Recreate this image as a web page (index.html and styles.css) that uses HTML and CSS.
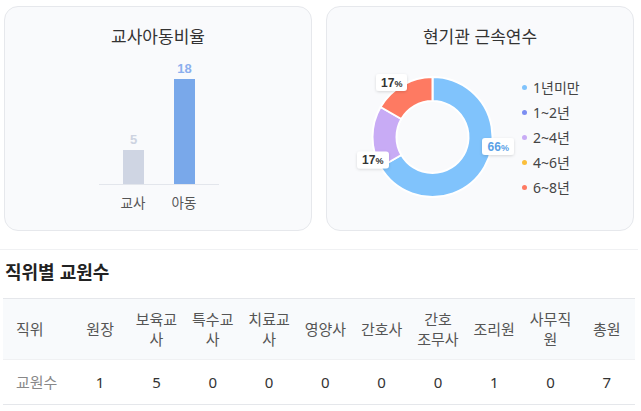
FILE: index.html
```html
<!DOCTYPE html>
<html lang="ko">
<head>
<meta charset="utf-8">
<link rel="stylesheet" href="styles.css">
</head>
<body>
<div class="page">
  <div class="cards">
    <section class="card">
      <h3 class="card-title">교사아동비율</h3>
      <svg class="bar-chart" width="306" height="175" viewBox="0 0 306 175">
        <line x1="94" y1="137.5" x2="214" y2="137.5" stroke="#e3e6ec" stroke-width="1"/>
        <rect x="118" y="103" width="21" height="34" fill="#cfd5e3"/>
        <rect x="169" y="32" width="21" height="105" fill="#79a8ea"/>
        <text class="val val-teacher" x="128.5" y="97" text-anchor="middle">5</text>
        <text class="val val-child" x="179.5" y="26" text-anchor="middle">18</text>
        <text class="cat" x="128" y="161" text-anchor="middle">교사</text>
        <text class="cat" x="179" y="161" text-anchor="middle">아동</text>
      </svg>
    </section>
    <section class="card">
      <h3 class="card-title">현기관 근속연수</h3>
      <div class="donut-row">
        <svg class="donut" width="192" height="175" viewBox="0 0 192 175">
          <defs>
            <filter id="sh" x="-30%" y="-40%" width="160%" height="180%">
              <feDropShadow dx="0" dy="1" stdDeviation="1.5" flood-color="#000" flood-opacity="0.14"/>
            </filter>
          </defs>
          <path d="M105.5 30 A60 60 0 1 1 53.54 120 L74.32 108 A36 36 0 1 0 105.5 54 Z" fill="#80c3fc" stroke="#fff" stroke-width="2"/>
          <path d="M53.54 120 A60 60 0 0 1 53.54 60 L74.32 72 A36 36 0 0 0 74.32 108 Z" fill="#c8abf5" stroke="#fff" stroke-width="2"/>
          <path d="M53.54 60 A60 60 0 0 1 105.5 30 L105.5 54 A36 36 0 0 0 74.32 72 Z" fill="#fe7a62" stroke="#fff" stroke-width="2"/>
          <rect x="49" y="27" width="31" height="17" rx="3" fill="#fff" filter="url(#sh)"/>
          <text class="pct" x="64.8" y="39.8" text-anchor="middle">17<tspan class="pct-sign">%</tspan></text>
          <rect x="30" y="104.5" width="32" height="17" rx="3" fill="#fff" filter="url(#sh)"/>
          <text class="pct" x="45.8" y="117.3" text-anchor="middle">17<tspan class="pct-sign">%</tspan></text>
          <rect x="155" y="91" width="32" height="17" rx="3" fill="#fff" filter="url(#sh)"/>
          <text class="pct pct-blue" x="171.3" y="103.8" text-anchor="middle">66<tspan class="pct-sign">%</tspan></text>
        </svg>
        <ul class="legend">
          <li><span class="dot dot-1"></span>1년미만</li>
          <li><span class="dot dot-2"></span>1~2년</li>
          <li><span class="dot dot-3"></span>2~4년</li>
          <li><span class="dot dot-4"></span>4~6년</li>
          <li><span class="dot dot-5"></span>6~8년</li>
        </ul>
      </div>
    </section>
  </div>
  <div class="divider"></div>
  <h2 class="section-title">직위별 교원수</h2>
  <table class="staff">
    <colgroup>
      <col class="col-first">
      <col><col><col><col><col><col><col><col><col><col>
    </colgroup>
    <thead>
      <tr>
        <th class="first">직위</th>
        <th>원장</th>
        <th>보육교사</th>
        <th>특수교사</th>
        <th>치료교사</th>
        <th>영양사</th>
        <th>간호사</th>
        <th class="keep">간호 조무사</th>
        <th>조리원</th>
        <th>사무직원</th>
        <th>총원</th>
      </tr>
    </thead>
    <tbody>
      <tr>
        <td class="first">교원수</td>
        <td>1</td>
        <td>5</td>
        <td>0</td>
        <td>0</td>
        <td>0</td>
        <td>0</td>
        <td>0</td>
        <td>1</td>
        <td>0</td>
        <td>7</td>
      </tr>
    </tbody>
  </table>
</div>
</body>
</html>
```

FILE: styles.css
```css
* { box-sizing: border-box; }

html, body {
  margin: 0;
  padding: 0;
  background: #ffffff;
}

body {
  font-family: "Noto Sans", "Noto Sans CJK KR", sans-serif;
  color: #333333;
}

.page {
  width: 641px;
  padding-top: 6px;
}

.cards {
  display: flex;
  gap: 14px;
  padding-left: 4px;
  width: 634px;
}

.card {
  width: 308px;
  height: 225px;
  border: 1px solid #e6e8ec;
  border-radius: 14px;
  background: #f9fafc;
  display: flex;
  flex-direction: column;
}

.card-title {
  margin: 0;
  padding-top: 17px;
  height: 40px;
  font-size: 17px;
  line-height: 24px;
  font-weight: 400;
  text-align: center;
  color: #333333;
  font-family: "Noto Sans CJK KR", sans-serif;
}

.bar-chart, .donut {
  display: block;
}

.val {
  font-family: "Liberation Sans", Arial, sans-serif;
  font-weight: 700;
  font-size: 13px;
}

.val-teacher { fill: #cdd3e1; }
.val-child { fill: #8bafee; }

.cat {
  font-family: "Noto Sans CJK KR", sans-serif;
  font-size: 13.5px;
  fill: #555555;
}

.donut-row {
  display: flex;
  align-items: flex-start;
}

.pct {
  font-family: "Liberation Sans", Arial, sans-serif;
  font-weight: 700;
  font-size: 12px;
  fill: #333333;
}

.pct-blue { fill: #5a9fe6; }

.pct-sign {
  font-size: 9px;
}

.legend {
  list-style: none;
  margin: 28px 0 0 0;
  padding: 0 0 0 3px;
  font-size: 14px;
  line-height: 25px;
  color: #444444;
}

.legend li {
  display: flex;
  align-items: center;
  gap: 6px;
}

.dot {
  width: 5px;
  height: 5px;
  border-radius: 50%;
  display: inline-block;
}

.dot-1 { background: #80c3fc; }
.dot-2 { background: #7c8ef2; }
.dot-3 { background: #c8abf5; }
.dot-4 { background: #fbbf3b; }
.dot-5 { background: #fe7a62; }

.divider {
  margin-top: 18px;
  width: 638px;
  height: 1px;
  background: #f0f1f3;
}

.section-title {
  margin: 9px 0 0 5px;
  font-size: 18px;
  line-height: 24px;
  font-weight: 700;
  color: #222222;
  font-family: "Noto Sans CJK KR", sans-serif;
}

.staff {
  margin: 15px 0 0 3px;
  width: 632px;
  border-collapse: collapse;
  table-layout: fixed;
  font-size: 15px;
}

.col-first { width: 69px; }

.staff th {
  font-weight: 400;
  color: #555555;
  background: #f8fafc;
  border-top: 1px solid #e5e7eb;
  border-bottom: 1px solid #f0f1f3;
  padding: 10px 5px 10px;
  line-height: 20px;
  text-align: center;
}

.staff th.keep {
  word-break: keep-all;
}

.staff td {
  color: #333333;
  padding: 11px 5px;
  line-height: 22px;
  text-align: center;
  border-bottom: 1px solid #e5e7eb;
}

.staff .first {
  text-align: left;
  padding-left: 13px;
}

.staff td.first {
  color: #888888;
}
```
